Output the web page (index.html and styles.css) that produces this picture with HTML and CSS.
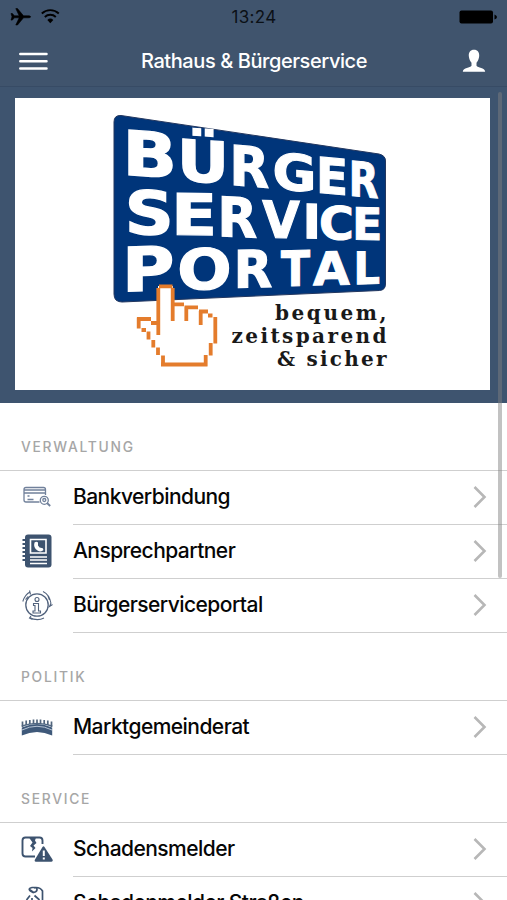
FILE: index.html
```html
<!DOCTYPE html>
<html lang="de">
<head>
<meta charset="utf-8">
<title>Rathaus &amp; Bürgerservice</title>
<link rel="stylesheet" href="styles.css">
</head>
<body>
<header class="top">
  <div class="status">
    <svg class="status-left" viewBox="0 0 52 20" width="52" height="20">
      <path stroke="#000" stroke-width=".6" d="M1 5.500h1.400l2 2.300h4.800L5.800.6h1.700l6 7.200h4.300c2 0 2.800.4 2.800 1s-.8 1-2.800 1h-4.300l-6 7.200H5.800L9.200 9.800H4.400l-2 2.300H1L2 8.800z"/>
      <path d="M31.800 5.500a12.500 12.500 0 0 1 17 0M34.800 9a8 8 0 0 1 11 0" fill="none" stroke="#000" stroke-width="1.900"/>
      <path d="M37.300 12a4.400 4.400 0 0 1 6 0l-3 3.200z"/>
    </svg>
    <span class="clock">13:24</span>
    <svg class="battery" viewBox="0 0 40 16" width="40" height="16"><rect x="1.500" y="1.500" width="33.500" height="13" rx="2"/><path d="M36.500 5.500q2.500 1 2.500 2.500t-2.500 2.500z"/></svg>
  </div>
  <nav class="bar">
    <svg class="menu" viewBox="0 0 30 20" width="30" height="20"><path d="M2.300 3H28.500M2.300 10.200H28.500M2.300 17.500H28.500" stroke="#fff" stroke-width="2.500" stroke-linecap="round"/></svg>
    <h1 class="title">Rathaus &amp; Bürgerservice</h1>
    <svg class="user" viewBox="0 0 24 24" width="24" height="24"><path fill="#fff" d="M12 .7c3.600 0 5.500 2.500 5.200 6.300-.2 3-1.500 5.200-2.700 6.700v3c1.300 2.200 8.300 1.600 8.700 6H.8c.4-4.400 7.400-3.800 8.700-6v-3C8.300 12.200 7 10 6.800 7 6.500 3.200 8.400.7 12 .7z"/></svg>
  </nav>
</header>
<section class="banner">
  <svg class="logo" viewBox="15 98 475 292" width="475" height="292" role="img" aria-label="Bürger Service Portal">
    <path fill="#00357a" stroke="#23375f" stroke-width="1" d="M121 115.500 L379 154 Q385.500 155.500 385.500 161 V284 Q385.500 290 379.500 290.500 L122 302 Q114 302 114 294 V122 Q114 115 121 115.500z"/>
    <g class="logo-letters">
      <text transform="matrix(.715 .05 0 .617 122.600 174.500)">B</text>
      <text transform="matrix(.640 .045 0 .570 177 180)">Ü</text>
      <text transform="matrix(.515 .045 0 .549 229.600 184.500)">R</text>
      <text transform="matrix(.535 .045 0 .500 272.600 188.500)">G</text>
      <text transform="matrix(.470 .040 0 .494 316 192.500)">E</text>
      <text transform="matrix(.385 .035 0 .480 348.700 195.500)">R</text>
      <text transform="matrix(.680 .02 0 .600 124.700 233.500)">S</text>
      <text transform="matrix(.670 .01 0 .570 171.200 234.500)">E</text>
      <text transform="matrix(.515 .02 0 .545 217.600 236)">R</text>
      <text transform="matrix(.485 .01 0 .510 262.200 237.500)">V</text>
      <text transform="matrix(.500 .01 0 .475 302.600 238.300)">I</text>
      <text transform="matrix(.475 .01 0 .458 318.900 239)">C</text>
      <text transform="matrix(.440 .01 0 .445 352.300 239.600)">E</text>
      <text transform="matrix(.715 -.02 0 .610 122 291.500)">P</text>
      <text transform="matrix(.640 -.01 0 .560 177.200 289.500)">O</text>
      <text transform="matrix(.500 -.01 0 .515 233.700 287.700)">R</text>
      <text transform="matrix(.425 -.01 0 .488 281 286.200)">T</text>
      <text transform="matrix(.475 -.01 0 .460 313.100 285.200)">A</text>
      <text transform="matrix(.415 -.01 0 .447 353.400 284.200)">L</text>
    </g>
    <path fill="#fff" d="M158 286H173V304H184V307H199V311H208V315H213V318H216V343H211V355H206V364H163V356H158V348H153V340H148V331H139V319H158z"/>
    <path fill="none" stroke="#e47c2c" stroke-width="3.800" d="M158.300 335V288M159 286.300H172.500M172.700 288V321M174.500 304.300H184M184.500 307.300H198M186.300 307V321M199 311.500H208M200.700 311V325M208 315.500H212.500M215.300 317V343.500M210.700 343V355.500M205.700 355V366M207.500 364.500H161M163 366V355.500M158 355V347.500M153.300 347.500V340M148.500 339.500V331.500M141.500 330H146M138.700 328.500V317.500M137 319H151M151 323H157"/>
    <g class="slogan">
      <text x="275" y="320.300" textLength="111.500">bequem,</text>
      <text x="231.500" y="342.800" textLength="155">zeitsparend</text>
      <text x="277" y="365.800" textLength="109.500">&amp; sicher</text>
    </g>
  </svg>
</section>
<main class="list">
  <h2 class="group">VERWALTUNG</h2>
  <div class="row">
    <svg class="icon" viewBox="0 0 32 36" width="32" height="36" fill="none" stroke="#71819b" stroke-width="1.300">
      <path d="M18.500 23H5Q3 23 3 21V10.500Q3 8.500 5 8.500H22.500Q24.500 8.500 24.500 10.500V16M3 11H24.500M3 14H24.500M6.500 17H8.500M6.500 20.500H12.500"/>
      <circle cx="23.300" cy="21.300" r="4"/><circle cx="23.300" cy="21" r="1.500"/><path d="M26 24l3.200 3" stroke-width="1.800"/>
    </svg>
    <div class="cell"><span class="label">Bankverbindung</span><svg class="chev" viewBox="0 0 14 24" width="14" height="24"><path d="M1.500 2 11.500 12 1.500 22"/></svg></div>
  </div>
  <div class="row">
    <svg class="icon" viewBox="0 0 32 36" width="32" height="36">
      <rect x="4" y="1.500" width="26.500" height="33" rx="3" fill="#3d536f"/>
      <path d="M1.500 7H6M1.500 11H6M1.500 15H6M1.500 19H6M1.500 23H6M1.500 27H6" stroke="#3d536f" stroke-width="1.800"/>
      <path d="M9.500 6.500H25V20H9.500z" fill="none" stroke="#fff" stroke-width="1.600"/>
      <path d="M13.500 9.500q2-1.500 3.500 0v3q1.500 3 4.500 2.500l1 2q-2.500 2.500-6 .5-4.500-3-3-8z" fill="#fff"/>
      <path d="M9 24H26M9 27H26M9 30.500H26" stroke="#fff" stroke-width="1.500"/>
    </svg>
    <div class="cell"><span class="label">Ansprechpartner</span><svg class="chev" viewBox="0 0 14 24" width="14" height="24"><path d="M1.500 2 11.500 12 1.500 22"/></svg></div>
  </div>
  <div class="row">
    <svg class="icon" viewBox="0 0 32 36" width="32" height="36" fill="none" stroke="#52637d" stroke-width="1.100">
      <circle cx="16" cy="18" r="11.200" stroke-width="1.300"/>
      <circle cx="16" cy="12.500" r="2"/><path d="M12.500 16.500H17.500V24H19.500V26H12V24H14V18.500H12.500z"/>
      <path d="M1.800 14.500Q4 7.500 9 5M9.500 7.500 8.500 3.500M22 4.500Q28.500 7.500 30 16.500M31.500 17.500 28.500 19.500 30 16M8.500 30.500Q16 34.500 23 31M10 29l-1.500 2 3 1.500M4.500 12.500 7 9.500M27 9l1.500 4"/>
    </svg>
    <div class="cell"><span class="label">Bürgerserviceportal</span><svg class="chev" viewBox="0 0 14 24" width="14" height="24"><path d="M1.500 2 11.500 12 1.500 22"/></svg></div>
  </div>
  <h2 class="group">POLITIK</h2>
  <div class="row">
    <svg class="icon" viewBox="0 0 32 36" width="32" height="36" fill="none">
      <path d="M.8 18.500Q16 11.500 31.200 18.500V26.500Q16 19.500 .8 26.500z" fill="#3f597a"/>
      <path d="M.8 17Q16 12 31.200 17" stroke="#526a87" stroke-width="1.500"/>
      <path d="M1 21Q16 13.500 31 21" stroke="#b7c4d5" stroke-width="1"/>
      <path d="M1.500 18V12.500M5.200 16V11.500M8.800 15V11M12.500 15V10.500M16 15V10.500M19.500 15V10.500M23.200 15V11M26.800 16V11.500M30.500 18V12.500" stroke="#51657d" stroke-width="1.700"/>
    </svg>
    <div class="cell"><span class="label">Marktgemeinderat</span><svg class="chev" viewBox="0 0 14 24" width="14" height="24"><path d="M1.500 2 11.500 12 1.500 22"/></svg></div>
  </div>
  <h2 class="group">SERVICE</h2>
  <div class="row">
    <svg class="icon" viewBox="0 0 32 36" width="32" height="36">
      <path d="M14 25.500H4.500Q1.500 25.500 1.500 22.500V9.500Q1.500 6.500 4.500 6.500H18.500Q21.500 6.500 21.500 9.500V13" fill="none" stroke="#3d536f" stroke-width="1.900"/>
      <path d="M8 6.500H15L14 9.500 15.500 12 12.500 14.500 14.500 17 11 20.500 11.500 17 9 15 11.500 11.500z" fill="#3d536f"/>
      <path d="M21.500 16Q22.500 14.500 23.500 16L31.500 28.500Q32.300 30.500 30.500 30.700H15Q13 30.500 14 28.500z" fill="#3d536f"/>
      <path d="M22.800 19.500V25M22.800 26.500V28.500" stroke="#fff" stroke-width="2"/>
    </svg>
    <div class="cell"><span class="label">Schadensmelder</span><svg class="chev" viewBox="0 0 14 24" width="14" height="24"><path d="M1.500 2 11.500 12 1.500 22"/></svg></div>
  </div>
  <div class="row">
    <svg class="icon" viewBox="0 0 32 36" width="32" height="36" fill="none" stroke="#3d536f" stroke-width="1.700">
      <path d="M12 7.500Q8.500 6 8.300 4.500T11 2.500H15Q19.500 2.500 21.500 6V19M8.500 4.500 12.500 7.500Q16 7 16 4.500T13 3M9 10.500 5.500 15M13.500 10.500 18.500 15M11 13v4M5.500 15v5"/>
    </svg>
    <div class="cell"><span class="label">Schadenmelder Straßen</span><svg class="chev" viewBox="0 0 14 24" width="14" height="24"><path d="M1.500 2 11.500 12 1.500 22"/></svg></div>
  </div>
</main>
<div class="scrollbar"></div>
</body>
</html>
```

FILE: styles.css
```css
* { box-sizing: border-box; }
body {
  margin: 0;
  height: 900px;
  overflow: hidden;
  position: relative;
  background: #fff;
  color: #060606;
  font-family: Inter, "Liberation Sans", sans-serif;
}
svg { display: block; flex: none; }
.top { height: 87px; background: #40546d; border-bottom: 1px solid #374b65; }
.status {
  height: 34px;
  padding: 0 9px 0 10px;
  display: grid;
  grid-template-columns: 1fr auto 1fr;
  align-items: center;
}
.status-left { margin-top: 2px; }
.clock { font-size: 17px; letter-spacing: .35px; color: #0b1016; }
.battery { justify-self: end; }
.bar {
  height: 52px;
  padding: 2px 21px 0 18px;
  display: grid;
  grid-template-columns: 30px 1fr 24px;
  align-items: center;
}
.title {
  margin: 0;
  padding-right: 2px;
  text-align: center;
  font-size: 20px;
  line-height: 28px;
  font-weight: 550;
  letter-spacing: -.42px;
  color: #fff;
}
.banner { height: 316px; padding: 11px 15px 0; background: #3e546f; }
.logo { background: #fff; }
.logo-letters {
  fill: #fff;
  stroke: #fff;
  stroke-width: 2.2px;
  font: bold 100px "DejaVu Sans", sans-serif;
}
.slogan { fill: #191919; font: bold 20px "DejaVu Serif", serif; }
.group {
  height: 68px;
  margin: 0;
  padding: 35px 21px 0;
  border-bottom: 1px solid #cfcfcf;
  font-size: 13.800px;
  line-height: 18px;
  font-weight: 550;
  letter-spacing: 1.75px;
  color: #a6a6a6;
}
.row { height: 54px; padding-left: 21px; display: flex; gap: 20px; }
.icon { margin-top: 8px; }
.cell {
  flex: 1;
  display: flex;
  align-items: center;
  justify-content: space-between;
  padding: 0 20px 1px 0;
  border-bottom: 1px solid #cfcfcf;
}
.label {
  font-size: 21px;
  line-height: 28px;
  font-weight: 480;
  letter-spacing: -.55px;
  white-space: nowrap;
}
.chev { fill: none; stroke: #b7b7b7; stroke-width: 2.6; }
.scrollbar {
  position: absolute;
  left: 498px;
  top: 92px;
  width: 4px;
  height: 486px;
  border-radius: 2px;
  background: rgba(128, 128, 128, .48);
}
```
